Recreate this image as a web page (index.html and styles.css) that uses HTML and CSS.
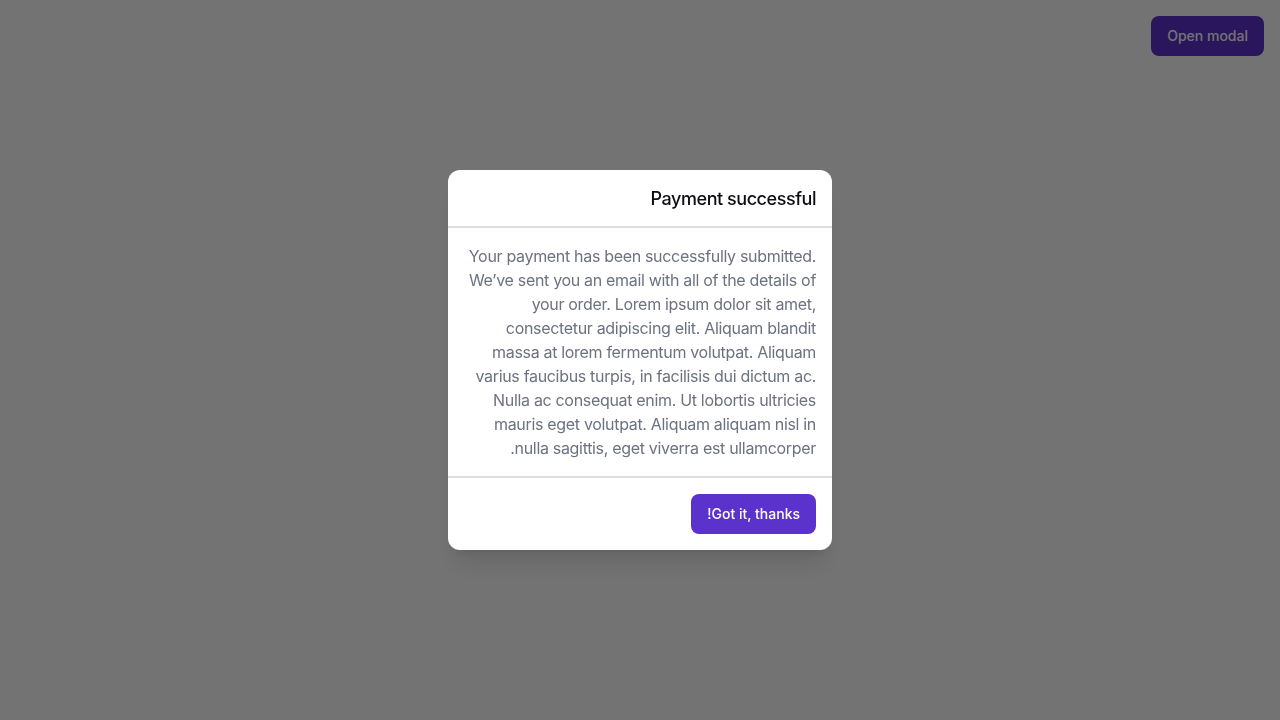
FILE: index.html
```html
<!DOCTYPE html>
<html lang="en" dir="rtl">
<head>
<meta charset="utf-8">
<title>Modal</title>
<link rel="stylesheet" href="styles.css">
</head>
<body>
<div class="page">
  <button class="btn btn-open">Open modal</button>
</div>
<div class="overlay">
  <div class="modal">
    <div class="modal-header">
      <h3 class="modal-title">Payment successful</h3>
    </div>
    <div class="modal-body">
      <p>Your payment has been successfully submitted. We’ve sent you an email with all of the details of your order. Lorem ipsum dolor sit amet, consectetur adipiscing elit. Aliquam blandit massa at lorem fermentum volutpat. Aliquam varius faucibus turpis, in facilisis dui dictum ac. Nulla ac consequat enim. Ut lobortis ultricies mauris eget volutpat. Aliquam aliquam nisl in nulla sagittis, eget viverra est ullamcorper.</p>
    </div>
    <div class="modal-footer">
      <button class="btn btn-primary">Got it, thanks!</button>
    </div>
  </div>
</div>
</body>
</html>
```
FILE: styles.css
```css
* { box-sizing: border-box; }
html, body { margin: 0; padding: 0; }
body {
  font-family: Inter, "Noto Sans", sans-serif;
  background: #ffffff;
  width: 1280px;
  height: 720px;
  overflow: hidden;
}
.page {
  display: flex;
  justify-content: flex-start;
  padding: 16px;
}
.btn {
  font-family: Inter, sans-serif;
  font-size: 14px;
  font-weight: 500;
  line-height: 20px;
  letter-spacing: 0;
  color: #ffffff;
  background: #5b32cc;
  border: none;
  border-radius: 8px;
  padding: 10px 16px;
  height: 40px;
  white-space: nowrap;
  cursor: pointer;
}
.overlay {
  position: fixed;
  inset: 0;
  background: rgba(0, 0, 0, 0.55);
  display: flex;
  align-items: center;
  justify-content: center;
}
.modal {
  width: 384px;
  background: #ffffff;
  border-radius: 12px;
  box-shadow: 0 20px 25px -5px rgba(0,0,0,0.1), 0 8px 10px -6px rgba(0,0,0,0.1);
  overflow: hidden;
}
.modal-header {
  padding: 16px;
  border-bottom: 2px solid #dedee2;
}
.modal-title {
  margin: 0;
  font-size: 18px;
  font-weight: 500;
  line-height: 24px;
  letter-spacing: -0.025em;
  color: #0d0d12;
  padding-top: 1px;
  margin-bottom: -1px;
}
.modal-body {
  padding: 16px;
  border-bottom: 2px solid #dedee2;
}
.modal-body p {
  margin: 0;
  font-size: 16px;
  line-height: 24px;
  letter-spacing: -0.02em;
  color: #6b7280;
}
.modal-footer {
  padding: 16px;
  display: flex;
  justify-content: flex-start;
}
```
